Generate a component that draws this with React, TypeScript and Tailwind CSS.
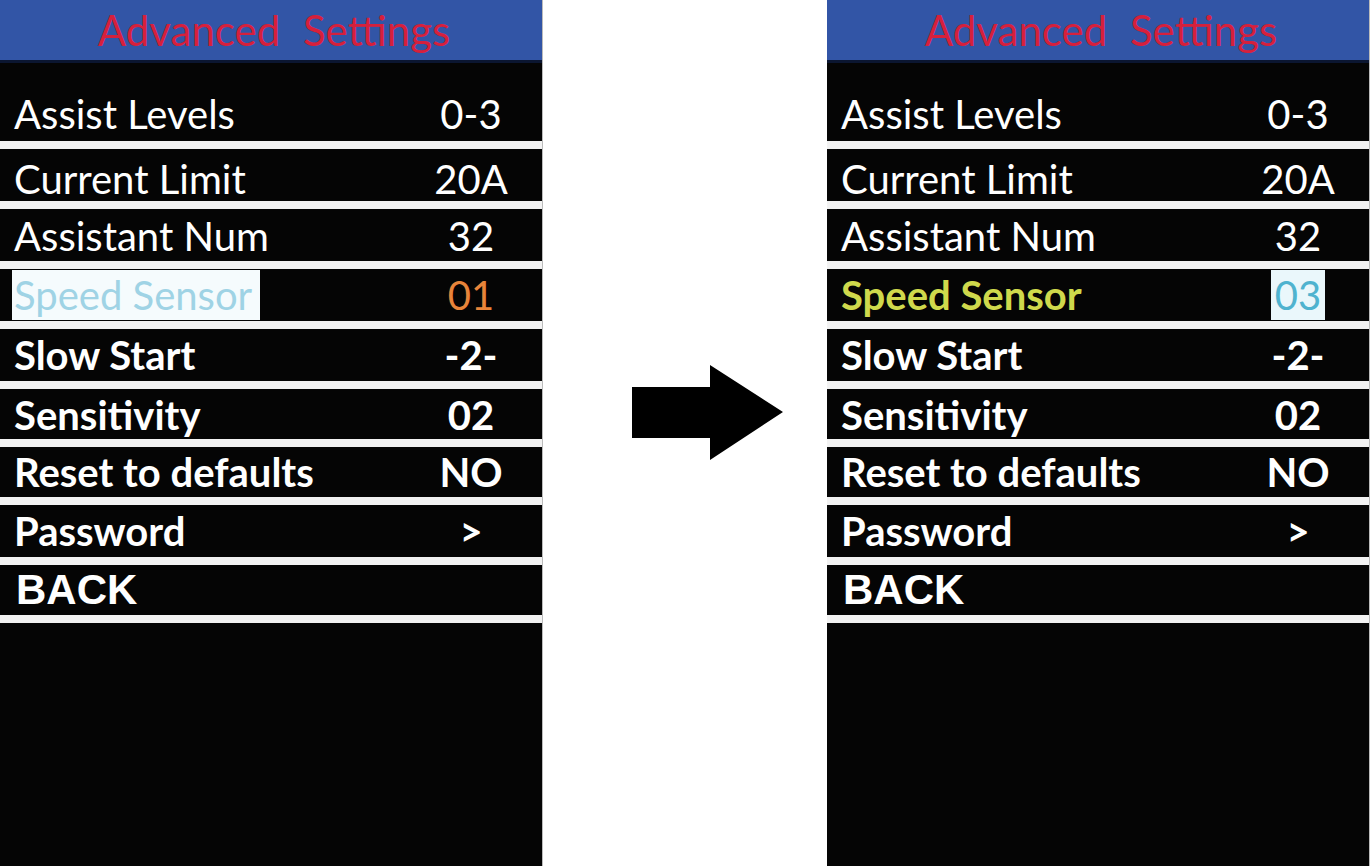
import type { ReactNode } from "react";

type Row = {
  label: ReactNode;
  value?: ReactNode;
  h: string;
  pt: string;
  bold?: boolean;
};

function Panel({ speedLabel, speedValue }: { speedLabel: ReactNode; speedValue: ReactNode }) {
  // row heights tuned to the photo of the display
  const rows: Row[] = [
    { label: "Assist Levels", value: "0-3", h: "h-[78px]", pt: "pt-[24px]" },
    { label: "Current Limit", value: "20A", h: "h-[52px]", pt: "pt-[8px]" },
    { label: "Assistant Num", value: "32", h: "h-[52px]", pt: "pt-[2px]" },
    { label: speedLabel, value: speedValue, h: "h-[52px]", pt: "pt-0" },
    { label: "Slow Start", value: "-2-", h: "h-[52px]", pt: "pt-0", bold: true },
    { label: "Sensitivity", value: "02", h: "h-[50px]", pt: "pt-[2px]", bold: true },
    { label: "Reset to defaults", value: "NO", h: "h-[50px]", pt: "pt-0", bold: true },
    { label: "Password", value: ">", h: "h-[52px]", pt: "pt-0", bold: true },
  ];

  return (
    <div className="flex h-full w-[543px] shrink-0 flex-col bg-[#050505] border-r border-[#bbbbbb]">
      {/* header */}
      <div className="flex h-[60px] items-center justify-center bg-[#3255a6]">
        <span className="pl-[6px] text-[42px] leading-none text-[#d6203c] [word-spacing:12px]">
          Advanced Settings
        </span>
      </div>
      <div className="h-[3px] bg-[#0b1631]" />

      {rows.map((r, i) => (
        <div key={i}>
          <div
            className={`flex items-center ${r.h} ${r.pt} pl-[14px] pr-[21px] text-[40px] leading-none text-white ${
              r.bold ? "font-bold" : "font-normal"
            }`}
          >
            <div className="flex-1">{r.label}</div>
            <div className="w-[100px] text-center">{r.value}</div>
          </div>
          <div className="h-[8px] bg-[#f2f2f2]" />
        </div>
      ))}

      {/* back */}
      <div className="flex h-[50px] items-center pl-[16px] font-['Liberation_Sans',Arial,sans-serif] text-[42px] font-bold leading-none text-white">
        BACK
      </div>
      <div className="h-[8px] bg-[#f2f2f2]" />
      <div className="flex-1" />
    </div>
  );
}

export default function App() {
  return (
    <div className="flex h-[866px] w-[1371px] bg-white font-[Lato,sans-serif]">
      <Panel
        speedLabel={
          <span className="-ml-[2px] bg-[#f5fbfd] px-[2px] pr-[8px] py-[1px] font-normal text-[#9fd3e5]">
            Speed Sensor
          </span>
        }
        speedValue={<span className="text-[#e8843a]">01</span>}
      />

      {/* arrow between the two screens */}
      <div className="flex w-[284px] shrink-0 items-start pt-[365px] pl-[89px]">
        <svg width="151" height="95" viewBox="0 0 151 95">
          <polygon points="0,22 78,22 78,0 151,47 78,95 78,73 0,73" fill="#000" />
        </svg>
      </div>

      <Panel
        speedLabel={<span className="font-bold text-[#cfd94c]">Speed Sensor</span>}
        speedValue={
          <span className="bg-[#eaf7fb] px-[4px] py-[1px] text-[#4fb3cf]">03</span>
        }
      />
    </div>
  );
}
